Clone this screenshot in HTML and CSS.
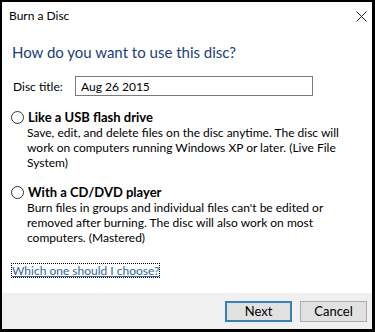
FILE: index.html
```html
<!DOCTYPE html>
<html lang="en">
<head>
<meta charset="UTF-8">
<title>Burn a Disc</title>
<link rel="stylesheet" href="styles.css">
</head>
<body>

<div class="window">
    <div class="titlebar">
        <span class="title">Burn a Disc</span>
        <svg class="close" width="11" height="11" viewBox="0 0 11 11">
            <path d="M0.5 0.5 L10.5 10.5 M10.5 0.5 L0.5 10.5" stroke="#222" stroke-width="1" fill="none"/>
        </svg>
    </div>

    <div class="content">
        <h1 class="heading">How do you want to use this disc?</h1>

        <div class="title-row">
            <label for="discTitle">Disc title:</label>
            <input type="text" id="discTitle" class="text-box" value="Aug 26 2015">
        </div>

        <div class="option">
            <div class="option-head">
                <span class="radio"></span>
                <span class="option-name">Like a USB flash drive</span>
            </div>
            <p class="option-desc">Save, edit, and delete files on the disc anytime. The disc will work on computers running Windows XP or later. (Live File System)</p>
        </div>

        <div class="option">
            <div class="option-head">
                <span class="radio"></span>
                <span class="option-name">With a CD/DVD player</span>
            </div>
            <p class="option-desc">Burn files in groups and individual files can't be edited or removed after burning. The disc will also work on most computers. (Mastered)</p>
        </div>

        <a class="help-link" href="#">Which one should I choose?</a>
    </div>

    <div class="footer">
        <button class="btn btn-default">Next</button>
        <button class="btn">Cancel</button>
    </div>
</div>

</body>
</html>
```

FILE: styles.css
```css
body {
    margin: 0;
    font-family: Lato, sans-serif;
    font-size: 12px;
    color: #000;
    background-color: #000;
}
.window {
    width: 375px;
    height: 332px;
    box-sizing: border-box;
    border-style: solid;
    border-color: #000;
    border-width: 2px 3px 3px 2px;
    background-color: #fff;
    display: flex;
    flex-direction: column;
}
.titlebar {
    height: 27px;
    display: flex;
    align-items: center;
    justify-content: space-between;
    padding: 0 5px 0 7px;
}
.close {
    margin-top: 1px;
}
.content {
    flex: 1;
    padding: 0 0 0 9px;
}
.heading {
    margin: 13px 0 0 1px;
    font-size: 15px;
    font-weight: normal;
    color: #20407a;
    line-height: 20px;
}
.title-row {
    display: flex;
    align-items: center;
    margin-top: 14px;
}
.title-row label {
    width: 64px;
    padding-left: 2px;
    box-sizing: border-box;
}
.text-box {
    width: 238px;
    height: 20px;
    box-sizing: border-box;
    border: 1px solid #7a7a7a;
    padding: 0 5px;
    font-family: inherit;
    font-size: 12px;
    color: #000;
}
.option {
    margin-top: 13px;
}
.option + .option {
    margin-top: 14px;
}
.option-head {
    display: flex;
    align-items: center;
    gap: 4px;
    height: 16px;
}
.radio {
    width: 11px;
    height: 11px;
    border: 1px solid #333;
    border-radius: 50%;
    background-color: #fff;
}
.option-name {
    font-weight: bold;
    font-size: 13px;
}
.option-desc {
    margin: 0 0 0 16px;
    line-height: 15px;
    width: 320px;
}
.help-link {
    display: inline-block;
    margin-top: 19px;
    margin-left: 1px;
    line-height: 13px;
    color: #3466a0;
    outline: 1px dotted #000;
}
.footer {
    height: 36px;
    background-color: #f0f0f0;
    display: flex;
    justify-content: flex-end;
    align-items: center;
    gap: 8px;
    padding-right: 5px;
}
.btn {
    width: 67px;
    height: 21px;
    border: 1px solid #adadad;
    background-color: #e1e1e1;
    font-family: inherit;
    font-size: 13px;
    color: #000;
    padding: 0;
}
.btn-default {
    border: 2px solid #3c7fb1;
}
```
